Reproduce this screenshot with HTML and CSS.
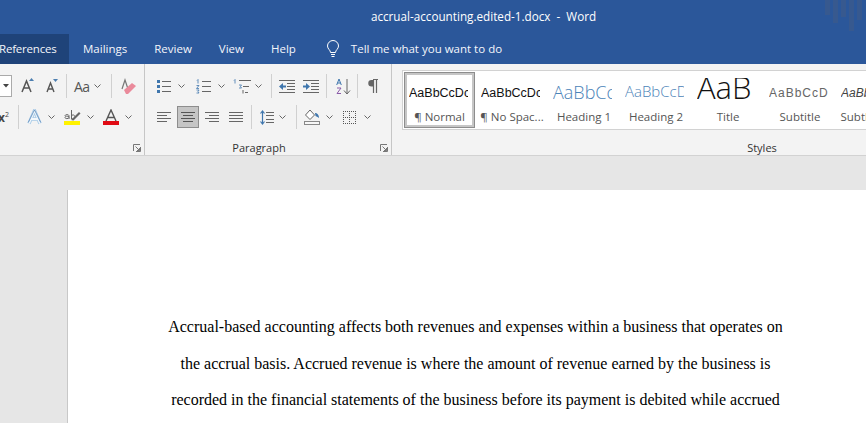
FILE: index.html
```html
<!DOCTYPE html>
<html lang="en">
<head>
  <meta charset="UTF-8">
  <title>accrual-accounting.edited-1.docx - Word</title>
  <link rel="stylesheet" href="styles.css">
</head>
<body>
<div class="app">
  <header class="titlebar">
    <span class="doc-title">accrual-accounting.edited-1.docx&nbsp; -&nbsp; Word</span>
    <div class="deco"><i class="d1"></i><i class="d2"></i><i class="d3"></i><i class="d4"></i><i class="d5"></i></div>
  </header>
  <nav class="tabs">
    <span class="tab active">References</span>
    <span class="tab">Mailings</span>
    <span class="tab">Review</span>
    <span class="tab">View</span>
    <span class="tab">Help</span>
    <svg class="bulb" width="14" height="18" viewBox="0 0 14 18" fill="none" stroke="#fff" stroke-width="1"><path d="M4.5 12.5C4.5 10 1.5 9 1.5 6a5.5 5.5 0 0 1 11 0c0 3-3 4-3 6.5z"/><path d="M5 14.5h4M5.5 16.5h3"/></svg>
    <span class="tell">Tell me what you want to do</span>
  </nav>

  <section class="ribbon">
    <div class="group font-group">
      <div class="row">
        <div class="combo"><svg width="6" height="4" viewBox="0 0 6 4"><path d="M0 0h6L3 3.500z" fill="#444"/></svg></div>
        <svg class="i-grow" width="14" height="16" viewBox="0 0 14 16"><path d="M1 14 5.500 3 10 14M2.700 10h5.600" fill="none" stroke="#555" stroke-width="1.500"/><path d="M8 3l2.500-3L13 3z" fill="#4d7fb0"/></svg>
        <svg class="i-shrink" width="13" height="14" viewBox="0 0 13 14"><path d="M1 13 4.500 4 8 13M2.300 10h4.400" fill="none" stroke="#555" stroke-width="1.400"/><path d="M7 0h5L9.500 3z" fill="#4d7fb0"/></svg>
        <i class="sep s-a"></i>
        <span class="aa">Aa</span>
        <svg class="chev c-aa" width="7" height="4" viewBox="0 0 7 4"><path d="M.5.500l3 3 3-3" fill="none" stroke="#666"/></svg>
        <i class="sep s-b"></i>
        <svg class="i-erase" width="16" height="17" viewBox="0 0 16 17"><path d="M1 11 4 2l3 9" fill="none" stroke="#777" stroke-width="1.200"/><path d="M3 12l8-7 4 3-8 8H5z" fill="#ea8a9b"/></svg>
      </div>
      <div class="row row2">
        <span class="sup">x<sup>2</sup></span>
        <i class="sep s-c"></i>
        <svg class="i-effect" width="15" height="16" viewBox="0 0 15 16"><path d="M2 14.500 7.500 1.500 13 14.500M4 10h7" fill="none" stroke="#a9cbe8" stroke-width="3.400"/><path d="M2 14.500 7.500 1.500 13 14.500M4 10h7" fill="none" stroke="#f3f8fc" stroke-width="1.800"/><path d="M1.300 13.500 7.500 .8l6.200 12.700" fill="none" stroke="#3f76ad" stroke-width=".7"/></svg>
        <svg class="chev c-effect" width="7" height="4" viewBox="0 0 7 4"><path d="M.5.500l3 3 3-3" fill="none" stroke="#666"/></svg>
        <svg class="i-high" width="17" height="16" viewBox="0 0 17 16"><path d="M1 7c0-2 4-2 4 0v3M5 8c-1-1.500-4-1-4 .5S4.500 10 5 8.500M7.500 1v9M7.500 7c1-2 3.500-1 3.500 1s-2.500 3-3.500 1" fill="none" stroke="#666"/><path d="M7 11l8-8 1.500 1.500-7 7z" fill="#666"/><rect y="12" width="16" height="4" fill="#fff200"/></svg>
        <svg class="chev c-high" width="7" height="4" viewBox="0 0 7 4"><path d="M.5.500l3 3 3-3" fill="none" stroke="#666"/></svg>
        <svg class="i-color" width="16" height="16" viewBox="0 0 16 16"><path d="M3 12 8 1l5 11M4.700 8.500h6.600" fill="none" stroke="#555" stroke-width="1.400"/><rect y="12" width="16" height="4" fill="#e00b14"/></svg>
        <svg class="chev c-color" width="7" height="4" viewBox="0 0 7 4"><path d="M.5.500l3 3 3-3" fill="none" stroke="#666"/></svg>
      </div>
      <svg class="launcher" width="8" height="8" viewBox="0 0 8 8"><path d="M.5 7V.5H7M7.500 3v4.500H3M2.500 2.500 6.500 6.500M6.500 4v2.500H4" fill="none" stroke="#777"/></svg>
    </div>

    <div class="group para-group">
      <div class="row">
        <svg class="t-first" width="14" height="15" viewBox="0 0 14 15"><path d="M5 2.500h9M5 7.500h9M5 12.500h9" stroke="#666"/><g fill="#3f76ad"><rect y="1" width="3" height="3"/><rect y="6" width="3" height="3"/><rect y="11" width="3" height="3"/></g></svg>
        <svg class="chev c-b" width="7" height="4" viewBox="0 0 7 4"><path d="M.5.500l3 3 3-3" fill="none" stroke="#666"/></svg>
        <svg class="t-num" width="15" height="15" viewBox="0 0 15 15"><path d="M6 2.500h9M6 7.500h9M6 12.500h9" stroke="#666"/><path d="M1 1.500l1-1v4M.5 6.500h2.500L.5 9.500H3M.5 11h2.500l-1 1.500 1 1.500H.5" fill="none" stroke="#3f76ad" stroke-width=".8"/></svg>
        <svg class="chev c-n" width="7" height="4" viewBox="0 0 7 4"><path d="M.5.500l3 3 3-3" fill="none" stroke="#666"/></svg>
        <svg class="t-multi" width="18" height="15" viewBox="0 0 18 15"><path d="M6 1.500h12M10 7.500h6M12 13.500h3" stroke="#666"/><path d="M1 1.500l1-1v4M6 6h2.500l-1 1.500 1 1.500H6" fill="none" stroke="#3f76ad" stroke-width=".8"/><path d="M10 11v3.500" stroke="#666"/></svg>
        <svg class="chev c-m" width="7" height="4" viewBox="0 0 7 4"><path d="M.5.500l3 3 3-3" fill="none" stroke="#666"/></svg>
        <i class="sep s-d"></i>
        <svg class="t-out" width="16" height="13" viewBox="0 0 16 13"><path d="M0 .5h16M8 3.500h8M8 6.500h8M8 9.500h8M0 12.500h16" stroke="#666"/><path d="M0 6.500 4 3v2.500h3v2H4V10z" fill="#3f76ad"/></svg>
        <svg class="t-in" width="16" height="13" viewBox="0 0 16 13"><path d="M0 .5h16M8 3.500h8M8 6.500h8M8 9.500h8M0 12.500h16" stroke="#666"/><path d="M7 6.500 3 3v2.500H0v2h3V10z" fill="#3f76ad"/></svg>
        <i class="sep s-e"></i>
        <svg class="t-sort" width="15" height="17" viewBox="0 0 15 17"><path d="M.7 7 3 1l2.300 6M1.500 5h3" fill="none" stroke="#3f76ad"/><path d="M1 10h4L1 15.500h4" fill="none" stroke="#8a5aa8"/><path d="M11 1v15M8 12.500l3 3.500 3-3.500" fill="none" stroke="#666"/></svg>
        <i class="sep s-f"></i>
        <svg class="t-pil" width="10" height="14" viewBox="0 0 10 14"><path d="M5 1H3.500a3 3 0 0 0 0 6.500H5z" fill="#666"/><path d="M5 .5h5M5.500 1v13M8.500 1v13" stroke="#666" stroke-width="1.200"/></svg>
      </div>
      <div class="row row2">
        <svg class="t-first" width="14" height="11" viewBox="0 0 14 11"><path d="M0 .5h14M0 3.500h10M0 6.500h14M0 9.500h10" stroke="#666"/></svg>
        <div class="center-on"><svg width="14" height="11" viewBox="0 0 14 11"><path d="M0 .5h14M2 3.500h10M0 6.500h14M2 9.500h10" stroke="#555"/></svg></div>
        <svg class="t-right" width="14" height="11" viewBox="0 0 14 11"><path d="M0 .5h14M4 3.500h10M0 6.500h14M4 9.500h10" stroke="#666"/></svg>
        <svg class="t-just" width="14" height="11" viewBox="0 0 14 11"><path d="M0 .5h14M0 3.500h14M0 6.500h14M0 9.500h14" stroke="#666"/></svg>
        <i class="sep s-g"></i>
        <svg class="t-space" width="14" height="15" viewBox="0 0 14 15"><path d="M6 2.500h8M6 5.500h8M6 9.500h8M6 12.500h8" stroke="#666"/><path d="M2.500 1v13M.5 3.500l2-2.500 2 2.500M.5 11.500l2 2.500 2-2.500" fill="none" stroke="#3f76ad" stroke-width="1.200"/></svg>
        <svg class="chev c-s" width="7" height="4" viewBox="0 0 7 4"><path d="M.5.500l3 3 3-3" fill="none" stroke="#666"/></svg>
        <i class="sep s-h"></i>
        <svg class="t-shade" width="16" height="16" viewBox="0 0 16 16"><path d="M6 1 1.500 6 6 10.500 10.500 6z" fill="#fff" stroke="#666"/><path d="M11 4c2 0 4 1.500 4 5l-1.500-1-2-1z" fill="#3f76ad"/><rect x=".5" y="12.500" width="15" height="3" fill="#f7f7f7" stroke="#888"/></svg>
        <svg class="chev c-sh" width="7" height="4" viewBox="0 0 7 4"><path d="M.5.500l3 3 3-3" fill="none" stroke="#666"/></svg>
        <svg class="t-bord" width="13" height="13" viewBox="0 0 13 13"><path d="M0 .5h13M0 6.500h13M0 12.500h13M.5 0v13M6.500 0v13M12.500 0v13" fill="none" stroke="#555" stroke-dasharray="1 1"/></svg>
        <svg class="chev c-bd" width="7" height="4" viewBox="0 0 7 4"><path d="M.5.500l3 3 3-3" fill="none" stroke="#666"/></svg>
      </div>
      <div class="group-label">Paragraph</div>
      <svg class="launcher" width="8" height="8" viewBox="0 0 8 8"><path d="M.5 7V.5H7M7.500 3v4.500H3M2.500 2.500 6.500 6.500M6.500 4v2.500H4" fill="none" stroke="#777"/></svg>
    </div>

    <div class="group styles-group">
      <div class="gallery">
        <div class="style on"><div class="sample s-normal">AaBbCcDc</div><div class="cap">¶ Normal</div></div>
        <div class="style"><div class="sample s-normal">AaBbCcDc</div><div class="cap">¶ No Spac...</div></div>
        <div class="style"><div class="sample s-h1">AaBbCc</div><div class="cap">Heading 1</div></div>
        <div class="style"><div class="sample s-h2">AaBbCcD</div><div class="cap">Heading 2</div></div>
        <div class="style"><div class="sample s-title">AaB</div><div class="cap">Title</div></div>
        <div class="style"><div class="sample s-sub">AaBbCcD</div><div class="cap">Subtitle</div></div>
        <div class="style"><div class="sample s-em">AaBbCcD</div><div class="cap">Subtle Em...</div></div>
      </div>
      <div class="group-label">Styles</div>
    </div>
  </section>

  <main class="canvas">
    <div class="page">
      <p>Accrual-based accounting affects both revenues and expenses within a business that operates on<br>
      the accrual basis. Accrued revenue is where the amount of revenue earned by the business is<br>
      recorded in the financial statements of the business before its payment is debited while accrued</p>
    </div>
  </main>
</div>
</body>
</html>
```

FILE: styles.css
```css
html, body { margin: 0; padding: 0; }
body { font-family: "Open Sans", "Noto Sans", sans-serif; background: #e6e6e6; overflow: hidden; }
.app { width: 866px; height: 423px; overflow: hidden; display: flex; flex-direction: column; }

/* title bar + tabs */
.titlebar { height: 34px; background: #2b579a; color: #fff; display: flex; justify-content: center; align-items: center; position: relative; flex: none; padding-left: 101px; box-sizing: border-box; }
.doc-title { font-size: 11.7px; margin-top: -2px; white-space: nowrap; }
.deco { position: absolute; top: 0; left: 825px; display: flex; gap: 3px; align-items: flex-start; }
.deco i { display: block; width: 5px; background: #37598f; }
.d1 { height: 15px; }
.d2 { height: 23px; }
.d3 { height: 17px; }
.d4 { height: 31px; }
.d5 { height: 20px; }
.tabs { height: 30px; background: #2b579a; color: #f4f6fa; display: flex; align-items: center; flex: none; font-size: 11.5px; }
.tab { line-height: 29px; height: 30px; margin-right: 27px; }
.tab.active { background: #1f4379; width: 69px; margin-right: 14px; text-indent: -1px; letter-spacing: -.2px; }
.bulb { margin: 0 11px 0 3px; flex: none; }
.tell { line-height: 29px; height: 30px; white-space: nowrap; }

/* ribbon */
.ribbon { height: 91px; background: #f3f3f3; border-bottom: 1px solid #d2d2d2; display: flex; flex: none; }
.group { position: relative; height: 91px; box-sizing: border-box; border-right: 1px solid #c6c6c6; flex: none; }
.font-group { width: 145px; }
.para-group { width: 247px; }
.styles-group { border-right: none; width: 740px; }
.group-label { position: absolute; left: 0; right: 0; top: 76px; text-align: center; font-size: 11px; color: #333; }
.para-group .group-label { right: 18px; }
.launcher { position: absolute; right: 3px; top: 80px; }
.row { position: absolute; left: 0; right: 0; top: 11px; height: 22px; display: flex; align-items: center; }
.row2 { top: 42px; }
.sep { display: block; width: 1px; height: 24px; background: #d0d0d0; flex: none; }
.chev { flex: none; }

/* font group */
.combo { width: 12px; height: 22px; box-sizing: border-box; border: 1px solid #aaa; border-left: none; background: #fff; display: flex; align-items: center; justify-content: flex-end; padding-right: 2px; }
.i-grow { margin-left: 9px; }
.i-shrink { margin-left: 11px; }
.s-a { margin-left: 7px; }
.aa { margin-left: 7px; width: 16px; font-size: 14px; letter-spacing: -.6px; color: #555; }
.c-aa { margin-left: 4px; }
.s-b { margin-left: 10px; }
.i-erase { margin-left: 9px; }
.sup { font-size: 12px; font-weight: 700; color: #444; width: 9px; margin-left: -2px; line-height: 1; }
.sup sup { font-size: 7px; font-weight: 400; }
.s-c { margin-left: 11px; }
.i-effect { margin-left: 8px; }
.c-effect { margin-left: 6px; }
.i-high { margin-left: 9px; }
.c-high { margin-left: 6px; }
.i-color { margin-left: 9px; }
.c-color { margin-left: 6px; }

/* paragraph group */
.t-first { margin-left: 12px; }
.c-b { margin-left: 7px; }
.t-num { margin-left: 11px; }
.c-n { margin-left: 7px; }
.t-multi { margin-left: 8px; }
.c-m { margin-left: 4px; }
.s-d { margin-left: 9px; }
.t-out { margin-left: 7px; }
.t-in { margin-left: 8px; }
.s-e { margin-left: 7px; }
.t-sort { margin-left: 9px; }
.s-f { margin-left: 6px; }
.t-pil { margin-left: 10px; }
.center-on { width: 22px; height: 22px; margin-left: 6px; box-sizing: border-box; border: 1px solid #8d8d8d; background: #c5c5c5; display: flex; align-items: center; justify-content: center; flex: none; }
.t-right { margin-left: 6px; }
.t-just { margin-left: 10px; }
.s-g { margin-left: 8px; }
.t-space { margin-left: 8px; }
.c-s { margin-left: 5px; }
.s-h { margin-left: 10px; }
.t-shade { margin-left: 7px; }
.c-sh { margin-left: 6px; }
.t-bord { margin-left: 10px; }
.c-bd { margin-left: 8px; }

/* styles gallery */
.gallery { margin: 6px 0 0 10px; height: 60px; box-sizing: border-box; background: #fff; border: 1px solid #d2d2d2; border-right: none; display: flex; overflow: hidden; padding: 1px 0 0 1px; }
.style { width: 72px; height: 56px; box-sizing: border-box; flex: none; padding-top: 6px; overflow: hidden; text-align: center; }
.style.on { width: 71px; margin-right: 1px; border: 3px solid #c6c6c6; outline: 1px solid #8d8d8d; outline-offset: -1px; padding-top: 3px; }
.style.on .sample { margin-left: 2px; }
.sample { height: 31px; line-height: 30px; white-space: nowrap; overflow: hidden; width: 59px; margin-left: 5px; text-align: left; font-family: "Liberation Sans", sans-serif; }
.s-normal { font-size: 12.5px; color: #111; }
.s-h1 { font-size: 18px; line-height: 28px; color: #4b83b8; font-family: "Open Sans", sans-serif; font-weight: 300; }
.s-h2 { font-size: 15px; line-height: 27px; color: #4b83b8; font-family: "Open Sans", sans-serif; font-weight: 300; }
.s-title { font-size: 31px; line-height: 18px; color: #111; font-family: "Open Sans", sans-serif; font-weight: 300; }
.s-sub { font-size: 12px; color: #666; letter-spacing: 1px; }
.s-em { font-size: 12px; color: #444; font-style: italic; }
.cap { font-size: 11.5px; color: #555; white-space: nowrap; line-height: 16px; }

/* document */
.canvas { flex: 1; padding: 34px 0 0 67px; min-height: 0; }
.page { width: 816px; height: 400px; background: #fff; border-left: 1px solid #c8c8c8; box-sizing: border-box; padding-top: 119px; text-align: center; }
.page p { margin: 0; font-family: "Liberation Serif", serif; font-size: 16px; line-height: 36.6px; color: #000; }
```
